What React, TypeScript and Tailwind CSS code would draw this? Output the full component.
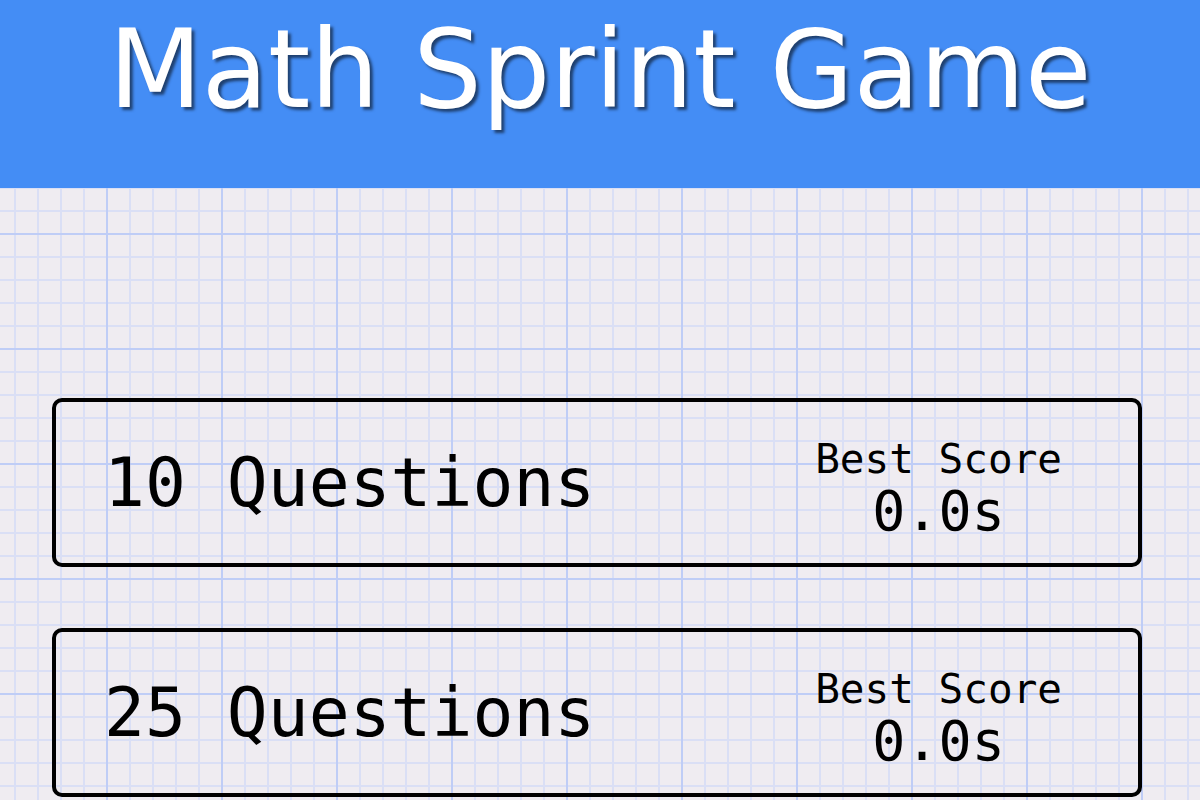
const questionCounts = [10, 25];

function QuestionCard({ count, best }: { count: number; best: string }) {
  return (
    <div className="flex h-[169px] w-[1090px] items-center justify-between rounded-[10px] border-4 border-black pl-[48px] pr-[76px]">
      <h2 className="text-[68px] leading-none text-black">{count} Questions</h2>
      <div className="flex flex-col items-center pt-[10px] text-black">
        <span className="text-[41px] leading-[46px]">Best Score</span>
        <span className="text-[55px] leading-[58px]">{best}</span>
      </div>
    </div>
  );
}

export default function App() {
  return (
    <div
      className="h-[800px] w-[1200px] overflow-hidden bg-[#efecf1] bg-[image:linear-gradient(to_right,#bfcdf6_2px,transparent_2px),linear-gradient(to_bottom,#bfcdf6_2px,transparent_2px),linear-gradient(to_right,#dadff5_2px,transparent_2px),linear-gradient(to_bottom,#dadff5_2px,transparent_2px)] bg-[size:115px_115px,115px_115px,23px_23px,23px_23px] bg-[position:106px_3px,106px_3px,14px_3px,14px_3px]"
      style={{ fontFamily: '"DejaVu Sans Mono", "Liberation Mono", monospace' }}
    >
      {/* Header */}
      <header className="flex h-[188px] justify-center bg-[#448df5] pt-[5px]">
        <h1
          className="text-[108px] leading-[130px] text-white [text-shadow:3px_3px_3px_rgba(0,0,0,0.55)]"
          style={{ fontFamily: '"DejaVu Sans", "Noto Sans", sans-serif' }}
        >
          Math Sprint Game
        </h1>
      </header>

      {/* Question options */}
      <div className="flex flex-col gap-[61px] pl-[52px] pt-[210px]">
        {questionCounts.map((count) => (
          <QuestionCard key={count} count={count} best="0.0s" />
        ))}
      </div>
    </div>
  );
}
